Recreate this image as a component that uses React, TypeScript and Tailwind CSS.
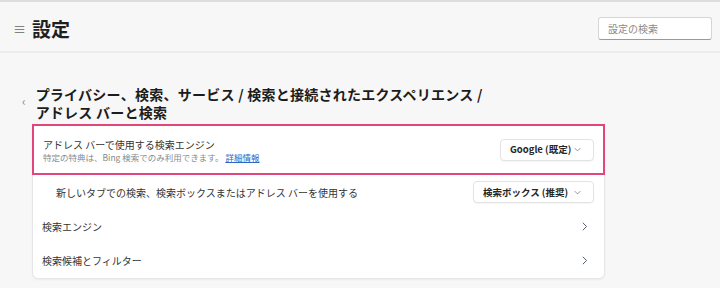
import React from "react";

const font = { fontFamily: '"Noto Sans CJK JP", "Noto Sans", sans-serif' };

function ChevronDown() {
  return (
    <svg width="9" height="9" viewBox="0 0 16 16" fill="none" className="text-gray-500 shrink-0">
      <path d="M3.5 6l4.5 4.5L12.5 6" stroke="currentColor" strokeWidth="1.3" strokeLinecap="round" strokeLinejoin="round" />
    </svg>
  );
}

function ChevronRight() {
  return (
    <svg width="11" height="11" viewBox="0 0 16 16" fill="none" className="text-gray-600">
      <path d="M6 3l5 5-5 5" stroke="currentColor" strokeWidth="1.4" strokeLinecap="round" strokeLinejoin="round" />
    </svg>
  );
}

function Dropdown({ label, width }: { label: string; width: string }) {
  return (
    <button
      className={`${width} h-[22px] flex items-center justify-between pl-[9px] pr-[11px] bg-white border border-[#e3e3e3] rounded-[4px] shadow-[0_1px_1px_rgba(0,0,0,0.04)] text-[9.5px] font-bold text-[#262626] whitespace-nowrap`}
    >
      <span>{label}</span>
      <ChevronDown />
    </button>
  );
}

export default function App() {
  return (
    <div style={font} className="w-[720px] h-[288px] overflow-hidden bg-[#f7f7f7] border-t-2 border-[#dedede]">
      <header className="h-[51px] flex items-center justify-between pl-[13px] pr-[8px] border-b-2 border-[#ececec]">
        <div className="flex items-center gap-[6px] pt-[4px]">
          <span className="text-[13px] text-[#666] leading-none">≡</span>
          <h1 className="text-[19px] font-bold text-[#1f1f1f] leading-none">設定</h1>
        </div>
        <div className="w-[114px] h-[23px] mt-[4px] bg-white border border-[#d6d6d6] border-b-[#9a9a9a] rounded-[3px] flex items-center px-[9px] text-[10px] text-[#8a8a8a]">
          設定の検索
        </div>
      </header>

      <main className="pl-[22px] pt-[32px]">
        <div className="flex items-start gap-[10px] mb-[3px]">
          <span className="text-[12px] text-[#888] leading-[17px] mt-[7px]">‹</span>
          <h2 className="text-[14px] font-bold text-[#1c1c1c] leading-[18px] tracking-[0.25px]">
            プライバシー、検索、サービス / 検索と接続されたエクスペリエンス /
            <br />
            アドレス バーと検索
          </h2>
        </div>

        <div className="ml-[10px] w-[573px] bg-white rounded-[6px] border border-[#e6e6e6] shadow-[0_1px_2px_rgba(0,0,0,0.05)]">
          <div className="h-[51px] -mx-px -mt-px border-2 border-[#e2457c] flex items-center justify-between pl-[9px] pr-[9px]">
            <div className="flex flex-col pt-[2px]">
              <span className="text-[10px] text-[#333] leading-[13px]">アドレス バーで使用する検索エンジン</span>
              <span className="text-[8.5px] text-[#8a8a8a] leading-[12px]">
                特定の特典は、Bing 検索でのみ利用できます。{" "}
                <span className="text-[#2b66c7] underline">詳細情報</span>
              </span>
            </div>
            <Dropdown label="Google (既定)" width="w-[94px]" />
          </div>

          <div className="h-[34px] flex items-center justify-between pl-[23px] pr-[10px]">
            <span className="text-[10px] text-[#333]">新しいタブでの検索、検索ボックスまたはアドレス バーを使用する</span>
            <Dropdown label="検索ボックス (推奨)" width="w-[121px]" />
          </div>

          <div className="h-[34px] flex items-center justify-between pl-[9px] pr-[14px]">
            <span className="text-[10px] text-[#333]">検索エンジン</span>
            <ChevronRight />
          </div>

          <div className="h-[35px] flex items-center justify-between pl-[9px] pr-[14px]">
            <span className="text-[10px] text-[#333]">検索候補とフィルター</span>
            <ChevronRight />
          </div>
        </div>
      </main>
    </div>
  );
}
